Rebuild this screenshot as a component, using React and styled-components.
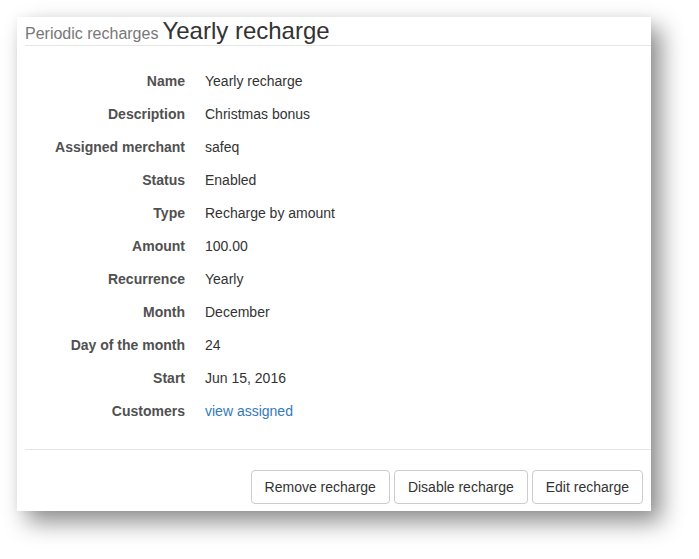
import React from 'react';
import styled, { createGlobalStyle } from 'styled-components';

const GlobalStyle = createGlobalStyle`
  html, body {
    margin: 0;
    padding: 0;
    background: #fff;
  }
  body {
    font-family: "Liberation Sans", Arial, sans-serif;
    font-size: 14px;
    color: #333;
  }
`;

const Page = styled.div`
  padding: 17px;
  height: 559px;
  box-sizing: border-box;
`;

const Card = styled.div`
  background: #fff;
  width: 634px;
  height: 494px;
  box-sizing: border-box;
  padding: 0 0 0 8px;
  box-shadow: 10px 11px 22px rgba(0, 0, 0, 0.45), 0 0 8px rgba(0, 0, 0, 0.04);
  display: flex;
  flex-direction: column;
`;

const Header = styled.div`
  display: flex;
  align-items: baseline;
  height: 28px;
  border-bottom: 1px solid #e5e5e5;
  white-space: nowrap;
`;

const Section = styled.span`
  font-size: 16px;
  line-height: 16px;
  color: #777;
  margin-right: 4px;
`;

const Title = styled.span`
  font-size: 24px;
  line-height: 27px;
  color: #333;
`;

const Details = styled.dl`
  margin: 25px 0 0;
  display: grid;
  grid-template-columns: 160px 1fr;
  column-gap: 20px;
  row-gap: 13px;
  line-height: 20px;
`;

const Label = styled.dt`
  font-weight: bold;
  text-align: right;
  color: #505050;
`;

const Value = styled.dd`
  margin: 0;
  color: #333;
`;

const Link = styled.a`
  color: #337ab7;
  text-decoration: none;
`;

const Footer = styled.div`
  margin-top: 28px;
  border-top: 1px solid #e5e5e5;
  padding: 20px 8px 0 0;
  display: flex;
  justify-content: flex-end;
  gap: 4px;
`;

const Button = styled.button`
  font-family: inherit;
  font-size: 14px;
  line-height: 20px;
  color: #333;
  background: #fff;
  border: 1px solid #ccc;
  border-radius: 4px;
  padding: 6px 13px;
  cursor: pointer;
`;

const rows = [
  ['Name', 'Yearly recharge'],
  ['Description', 'Christmas bonus'],
  ['Assigned merchant', 'safeq'],
  ['Status', 'Enabled'],
  ['Type', 'Recharge by amount'],
  ['Amount', '100.00'],
  ['Recurrence', 'Yearly'],
  ['Month', 'December'],
  ['Day of the month', '24'],
  ['Start', 'Jun 15, 2016'],
];

const App = () => {
  return (
    <Page>
      <GlobalStyle />
      <Card>
        <Header>
          <Section>Periodic recharges</Section>
          <Title>Yearly recharge</Title>
        </Header>
        <Details>
          {rows.map(([label, value]) => (
            <React.Fragment key={label}>
              <Label>{label}</Label>
              <Value>{value}</Value>
            </React.Fragment>
          ))}
          <Label>Customers</Label>
          <Value>
            <Link href="#">view assigned</Link>
          </Value>
        </Details>
        <Footer>
          <Button>Remove recharge</Button>
          <Button>Disable recharge</Button>
          <Button>Edit recharge</Button>
        </Footer>
      </Card>
    </Page>
  );
};

export default App;
